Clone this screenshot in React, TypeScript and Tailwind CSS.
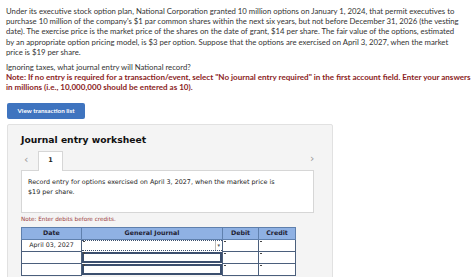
import React from "react";

export default function App() {
  const para = "whitespace-nowrap";
  return (
    <div className="w-[474px] h-[277px] overflow-hidden bg-white relative">
      <div className="pl-[6px] pt-[6px] text-[#333333] font-['Lato','Open_Sans',sans-serif] text-[7.75px] leading-[10.2px]">
        <p className={para}>
          Under its executive stock option plan, National Corporation granted 10 million options on January 1, 2024, that permit executives to
          <br />
          purchase 10 million of the company's $1 par common shares within the next six years, but not before December 31, 2026 (the vesting
          <br />
          date). The exercise price is the market price of the shares on the date of grant, $14 per share. The fair value of the options, estimated
          <br />
          by an appropriate option pricing model, is $3 per option. Suppose that the options are exercised on April 3, 2027, when the market
          <br />
          price is $19 per share.
        </p>
        <p className={`${para} mt-[5px]`}>Ignoring taxes, what journal entry will National record?</p>
        <p className={`${para} font-bold text-[#8b1e1e] text-[8.05px]`}>
          Note: If no entry is required for a transaction/event, select "No journal entry required" in the first account field. Enter your answers
          <br />
          in millions (i.e., 10,000,000 should be entered as 10).
        </p>
      </div>

      <div className="pl-[7px] mt-[10px]">
        <button className="w-[78px] h-[16px] rounded-[2px] bg-[#3f74bf] text-white font-bold text-[6.3px] font-['Lato',sans-serif] flex items-center justify-center">
          View transaction list
        </button>
      </div>

      <div className="ml-[7px] mt-[5px] w-[326px] h-[200px] bg-[#f4f4f4] border border-[#e1e1e1] rounded-[2px] pl-[13px] font-['DejaVu_Sans',sans-serif]">
        <div className="pt-[8px] text-[9.2px] font-bold text-[#111111] leading-[13px]">Journal entry worksheet</div>
        <div className="flex items-end mt-[4px] h-[20px] relative">
          <span className="w-[17px] text-[#9a9a9a] text-[11px] leading-[12px] pb-[4px] pl-[3px]">&lsaquo;</span>
          <div className="w-[25px] h-[20px] bg-white border border-[#d6d6d6] border-b-0 flex items-start justify-center pt-[4px] text-[6.5px] font-bold text-[#222] relative z-10 -mb-px">
            1
          </div>
          <span className="absolute left-[289px] top-[1px] text-[#9a9a9a] text-[11px]">&rsaquo;</span>
        </div>
        <div className="w-[293px] h-[43px] bg-white border border-[#d6d6d6] pl-[6px] pt-[6px] text-[6.4px] leading-[10px] text-[#222] whitespace-nowrap">
          Record entry for options exercised on April 3, 2027, when the market price is
          <br />
          $19 per share.
        </div>
        <div className="mt-[2px] text-[5.7px] text-[#9a3b3b] leading-[8px]">Note: Enter debits before credits.</div>
        <table className="mt-[4px] border-collapse text-[6.3px] text-[#222]">
          <thead>
            <tr className="bg-[#8fb1e3] h-[12px]">
              <th className="w-[60px] border border-[#5f80ad] font-bold text-[#223] p-0">Date</th>
              <th className="w-[141px] border border-[#5f80ad] font-bold text-[#223] p-0">General Journal</th>
              <th className="w-[36px] border border-[#5f80ad] font-bold text-[#223] p-0">Debit</th>
              <th className="w-[37px] border border-[#5f80ad] font-bold text-[#223] p-0">Credit</th>
            </tr>
          </thead>
          <tbody>
            {[0, 1, 2].map((i) => (
              <tr key={i} className="h-[12px] bg-white">
                <td className="border border-[#4b5f7c] text-center p-0">{i === 0 ? "April 03, 2027" : ""}</td>
                <td className="border-x border-[#4b5f7c] p-0 relative">
                  <div className={`h-[11px] ${i === 0 ? "border-y border-dotted border-[#3b4f6e]" : "border-2 border-[#3b4f6e]"} relative`}>
                    {i === 0 && (
                      <span className="absolute right-[2px] top-0 h-full border-l border-[#bbb] pl-[1px] text-[5px] text-[#555] leading-[9px]">&#9662;</span>
                    )}
                  </div>
                  <span className="absolute left-[1px] top-[1px] w-[1.5px] h-[1.5px] bg-[#444]" />
                </td>
                <td className="border border-[#4b5f7c] p-0 relative">
                  <span className="absolute left-[1px] top-[1px] w-[1.5px] h-[1.5px] bg-[#444]" />
                </td>
                <td className="border border-[#4b5f7c] p-0 relative">
                  <span className="absolute left-[1px] top-[1px] w-[1.5px] h-[1.5px] bg-[#444]" />
                </td>
              </tr>
            ))}
          </tbody>
        </table>
      </div>
    </div>
  );
}
